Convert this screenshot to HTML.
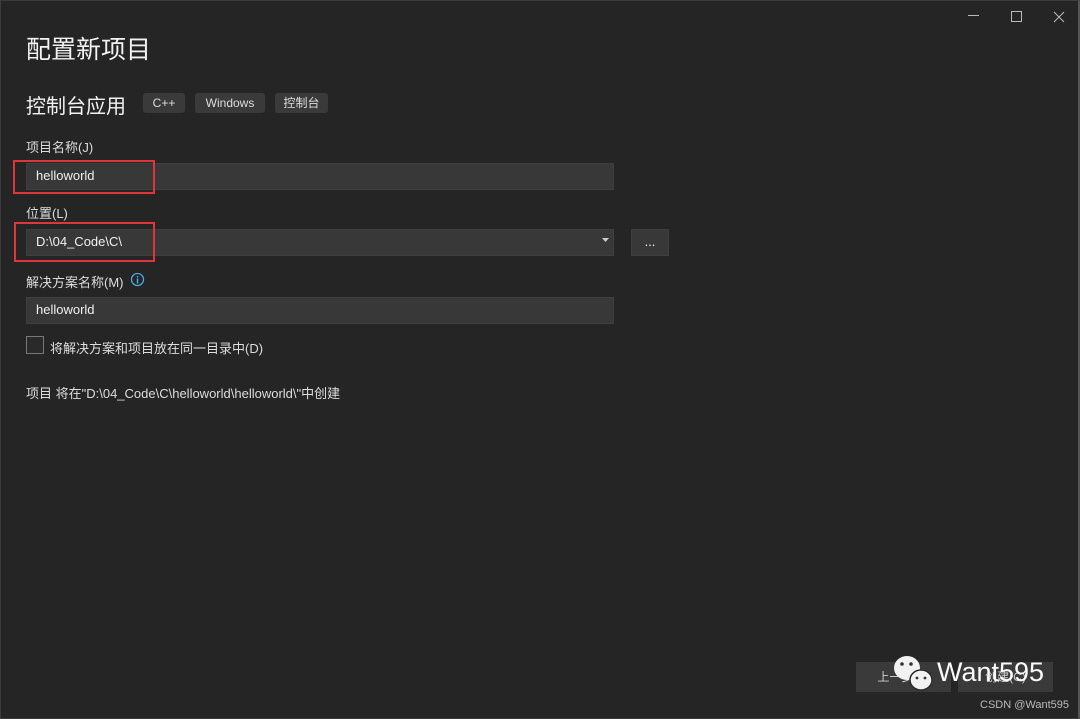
<!DOCTYPE html>
<html><head><meta charset="utf-8"><style>
*{margin:0;padding:0;box-sizing:border-box}
body{width:1080px;height:719px;background:#252525;position:relative;overflow:hidden;font-family:"Liberation Sans","Noto Sans CJK SC",sans-serif;color:#e8e8e8}
.frame{position:absolute;left:0;top:0;width:1080px;height:719px;border:1px solid #3c3c3c;border-right:2px solid #555}
.a{position:absolute}
.in{position:absolute;background:#383838;border:1px solid #3f3f3f;font-size:13px;color:#f0f0f0;padding-left:9px;line-height:24px}
.tag{position:absolute;top:93px;height:20px;background:#3a3a3a;border-radius:3px;font-size:12px;line-height:20px;text-align:center;color:#ddd}
.lbl{position:absolute;font-size:13px;color:#ddd}
.red{position:absolute;border:2px solid #e0363a}
.btn{position:absolute;background:#3a3a3a;top:662px;height:30px;width:95px;font-size:12px;line-height:30px;text-align:center;color:#ccc}
</style></head><body>
<div class="frame"></div>
<svg class="a" style="left:960px;top:8px" width="110" height="20"><path d="M8 7.5h11" stroke="#bbb" stroke-width="1"/><rect x="51.5" y="3.5" width="10" height="10" fill="none" stroke="#bbb"/><path d="M94 4l10 10M104 4l-10 10" stroke="#bbb"/></svg>
<div class="a" style="left:26px;top:30px;font-size:25px;color:#f2f2f2">配置新项目</div>
<div class="a" style="left:26px;top:90px;font-size:20px;color:#f2f2f2">控制台应用</div>
<div class="tag" style="left:143px;width:42px">C++</div>
<div class="tag" style="left:195px;width:70px">Windows</div>
<div class="tag" style="left:275px;width:53px">控制台</div>
<div class="lbl" style="left:26px;top:137px">项目名称(J)</div>
<div class="in" style="left:26px;top:163px;width:588px;height:27px">helloworld</div>
<div class="red" style="left:13px;top:160px;width:142px;height:34px"></div>
<div class="lbl" style="left:26px;top:203px">位置(L)</div>
<div class="in" style="left:26px;top:229px;width:588px;height:27px">D:\04_Code\C\</div>
<svg class="a" style="left:602px;top:238px" width="8" height="6"><path d="M0 0h7l-3.5 4z" fill="#ccc"/></svg>
<div class="red" style="left:14px;top:222px;width:141px;height:40px"></div>
<div class="in" style="left:631px;top:229px;width:38px;height:27px;padding:0;text-align:center;line-height:24px">...</div>
<div class="lbl" style="left:26px;top:272px">解决方案名称(M)</div>
<svg class="a" style="left:130px;top:272px" width="15" height="15"><circle cx="7.5" cy="7.5" r="6" fill="none" stroke="#4aa8e0" stroke-width="1.3"/><rect x="6.8" y="6.5" width="1.5" height="5" fill="#4aa8e0"/><rect x="6.8" y="4" width="1.5" height="1.5" fill="#4aa8e0"/></svg>
<div class="in" style="left:26px;top:297px;width:588px;height:27px">helloworld</div>
<div class="a" style="left:26px;top:336px;width:18px;height:18px;border:1px solid #777;background:#2a2a2a"></div>
<div class="lbl" style="left:50px;top:338px">将解决方案和项目放在同一目录中(D)</div>
<div class="lbl" style="left:26px;top:383px">项目 将在"D:\04_Code\C\helloworld\helloworld\"中创建</div>
<div class="btn" style="left:856px">上一步(B)</div>
<div class="btn" style="left:958px">创建(C)</div>
<svg class="a" style="left:892px;top:652px" width="46" height="42"><ellipse cx="15" cy="16" rx="13" ry="12" fill="#f2f2f2"/><ellipse cx="29" cy="28" rx="11" ry="10" fill="#f2f2f2" stroke="#2a2a2a" stroke-width="1.5"/><circle cx="10" cy="12" r="1.8" fill="#333"/><circle cx="19" cy="12" r="1.8" fill="#333"/><circle cx="25" cy="26" r="1.4" fill="#333"/><circle cx="33" cy="26" r="1.4" fill="#333"/></svg>
<div class="a" style="left:937px;top:657px;font-size:27px;color:#fafafa">Want595</div>
<div class="a" style="left:980px;top:699px;font-size:11px;color:#bbb">CSDN @Want595</div>
</body></html>
